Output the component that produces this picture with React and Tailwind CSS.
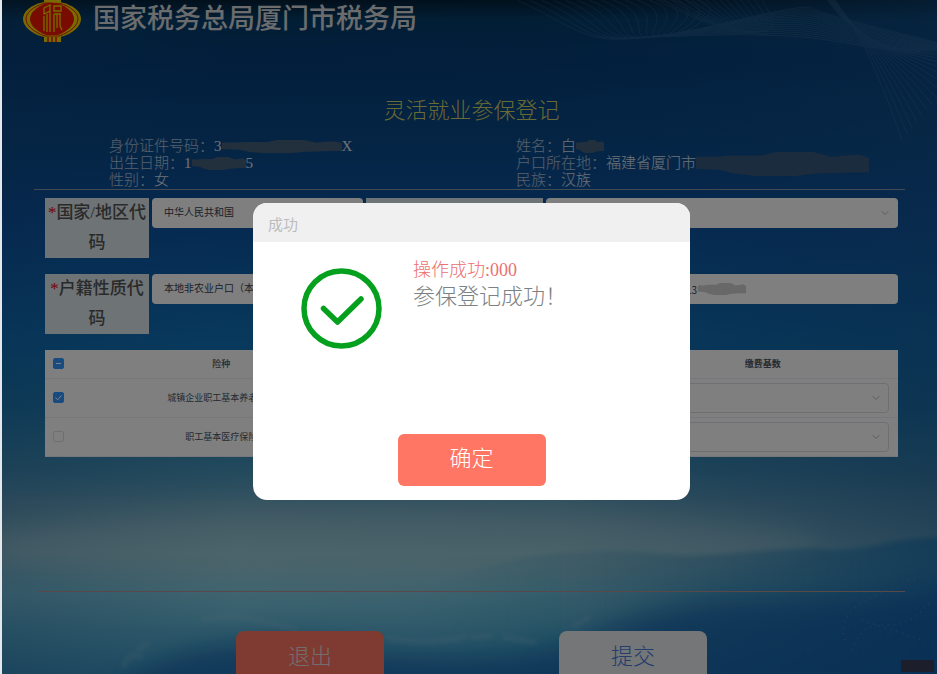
import { FiChevronDown } from "react-icons/fi";

const SERIF = "font-['Liberation_Serif','Noto_Sans_CJK_SC',serif]";
const SANS = "font-['Noto_Sans_CJK_SC',sans-serif]";

const insuranceRows = [
  { name: '城镇企业职工基本养老保险', checked: true },
  { name: '职工基本医疗保险', checked: false },
];

// Thin wave lines in the top right corner
const waves = Array.from({ length: 16 }, (_, i) => i);

const Background = () => (
  <svg className="absolute inset-0 w-full h-full" viewBox="0 0 935 674" preserveAspectRatio="none" fill="none" aria-hidden="true">
    <defs>
      <linearGradient id="sky" x1="0" y1="0" x2="0" y2="1">
        <stop offset="0" stopColor="#041c30" />
        <stop offset="0.03" stopColor="#043c68" />
        <stop offset="0.09" stopColor="#043c78" />
        <stop offset="0.2" stopColor="#0a4886" />
        <stop offset="0.33" stopColor="#0c54a4" />
        <stop offset="0.5" stopColor="#1074bc" />
        <stop offset="0.6" stopColor="#2080b8" />
        <stop offset="0.7" stopColor="#4a98bc" />
        <stop offset="0.75" stopColor="#70acc4" />
        <stop offset="0.82" stopColor="#94ccd8" />
        <stop offset="0.88" stopColor="#84d0e4" />
        <stop offset="0.94" stopColor="#60b8d8" />
        <stop offset="1" stopColor="#44a0cc" />
      </linearGradient>
      <linearGradient id="shade" x1="0" y1="0" x2="1" y2="0">
        <stop offset="0" stopColor="#104a88" stopOpacity="0.25" />
        <stop offset="0.25" stopColor="#0c4c90" stopOpacity="0.05" />
        <stop offset="0.6" stopColor="#0c4c90" stopOpacity="0.1" />
        <stop offset="1" stopColor="#145490" stopOpacity="0.5" />
      </linearGradient>
      <linearGradient id="hill" x1="0" y1="0" x2="1" y2="0">
        <stop offset="0" stopColor="#2484a8" stopOpacity="0" />
        <stop offset="0.5" stopColor="#1878ac" stopOpacity="0.3" />
        <stop offset="1" stopColor="#0c6cb0" stopOpacity="0.65" />
      </linearGradient>
      <filter id="soft" x="-20%" y="-50%" width="140%" height="200%">
        <feGaussianBlur stdDeviation="12" />
      </filter>
      <filter id="haze" x="-20%" y="-50%" width="140%" height="200%">
        <feGaussianBlur stdDeviation="2" />
      </filter>
    </defs>
    <rect width="935" height="674" fill="url(#sky)" />
    <rect width="935" height="674" fill="url(#shade)" />
    <ellipse cx="400" cy="545" rx="420" ry="38" fill="#b0ccd4" opacity="0.3" filter="url(#soft)" />
    <path d="M420 590 C520 545 610 548 680 556 C740 555 790 545 830 550 C880 550 890 535 960 538 V690 H420Z" fill="url(#hill)" filter="url(#haze)" />
    <path d="M100 700 C160 650 220 640 290 640 C380 655 430 660 500 655 C590 650 610 612 720 600 C820 600 870 595 960 585 V700Z" fill="#0a58a8" opacity="0.6" filter="url(#soft)" />
    <path d="M121 668 C125 655 135 652 140 658 M135 650 L146 643 M200 619 C240 614 260 620 296 630 M384 637 C410 643 440 643 465 636 M468 638 L490 636 M500 637 L535 643 M570 627 L588 617" stroke="#b0d8e8" strokeWidth="5" opacity="0.2" filter="url(#haze)" />
    <path d="M843 640 C835 610 860 600 900 585 M850 650 C870 600 890 650 930 600 M860 620 L920 640 M900 582 L920 577" stroke="#a0c8e8" strokeWidth="2" strokeDasharray="1 5" opacity="0.2" />
    <g stroke="#8cb4dc" opacity="0.15">
      {waves.map((i) => (
        <path key={i} d={`M${515 + i * 12} 0 C${560 + i * 12} ${20 - i / 2} ${580 + i * 5} 42 ${622 + i * 4} ${39 - i / 3} S${760 + i * 3} ${32 - i * 2} 810 ${38 - i * 2} S${870 + i * 3} ${52 - i} 935 ${50 - i / 2}`} />
      ))}
      {waves.map((i) => (
        <path key={i} d={`M${655 + i * 7} 0 C${690 + i * 6} ${18 + i} ${730 + i * 3} 36 ${770 - i * 4} ${34 - i / 3}`} />
      ))}
      {waves.map((i) => (
        <path key={i} d={`M${833 - i / 2} 0 C${850 + i} ${25 + i * 2} ${865 + i * 3} ${40 + i} ${900 + i * 5} ${140 - i * 6}`} />
      ))}
    </g>
  </svg>
);

const Emblem = () => (
  <svg className="w-[60px] h-[42px] shrink-0" viewBox="0 4 60 42" fill="none" aria-hidden="true">
    <path d="M22 0 H39 V9 H22Z M22 36 H39 V46 H22Z" fill="#f4d400" />
    <path d="M26 36 V46 M30 36 V46 M34 36 V46" stroke="#e02000" strokeWidth="1.5" />
    <path d="M22 6 C8 9 1 16 1 23 C1 30 9 38 22 41 H38 C51 38 59 30 59 23 C59 16 52 9 38 6Z" fill="#f4d400" />
    <path d="M23 7 C10 11 4 17 4 23 C4 29 11 36 23 40 H37 C49 36 56 29 56 23 C56 17 50 11 37 7Z" stroke="#e02000" strokeWidth="1" />
    <path d="M25 7 C14 11 8 17 8 23 C8 29 14 35 24 39 H36 C46 35 52 29 52 23 C52 17 46 11 35 7Z" fill="#f01800" />
    <path d="M22 5 L28 3 M22 12 L28 9 V15 L22 18 Z M31 6 H39 M32 10 H39 V15 H32Z M22 20 V35 M25 18 V36 M28 16 V36 M32 18 V36 M35 18 V32 M38 18 V30 L40 34 M32 18 H39" stroke="#f4d400" strokeWidth="1.3" />
  </svg>
);

const Smudge = ({ className }) => (
  <svg className={className} viewBox="0 0 100 20" preserveAspectRatio="none" aria-hidden="true">
    <path d="M0 4 L12 4 L20 3 L38 3 L46 0 L68 0 L78 4 L94 2 L100 5 V17 H88 L70 18 L58 20 H34 L22 18 L14 15 L0 14Z" fill="currentColor" />
  </svg>
);

const InfoLine = ({ label, children }) => (
  <div className="flex items-center h-[17px] whitespace-nowrap font-light">
    <dt className="text-white/65">{label}：</dt>
    <dd className="flex items-center text-white/85">{children}</dd>
  </div>
);

const FieldLabel = ({ htmlFor, children }) => (
  <label htmlFor={htmlFor} className={`${SERIF} h-[60px] bg-[#dce6ea] text-center text-[17px] leading-[30px] text-[#555] font-medium`}>
    <span className="text-red-600">*</span>{children}
  </label>
);

const SelectBox = ({ id, label, value, bordered }) => (
  <div className="relative">
    <select
      id={id}
      aria-label={label}
      className={`${SANS} block w-full h-[30px] appearance-none rounded-sm bg-white pl-3 pr-6 pb-1 text-[10px] text-gray-700 ${bordered ? 'border border-[#dcdfe6]' : ''}`}
    >
      <option>{value}</option>
    </select>
    <FiChevronDown className="absolute right-[7px] top-[9px] text-xs text-[#b4b8c0] pointer-events-none" />
  </div>
);

const Tick = ({ label, checked, partial }) => (
  <span className="relative block w-[11px] h-[11px]">
    <input
      type="checkbox"
      aria-label={label}
      defaultChecked={checked}
      className="block w-[11px] h-[11px] appearance-none rounded-xs border border-[#dcdfe6] checked:border-[#3096ff] checked:bg-[#3096ff]"
    />
    {checked && (
      <svg className="absolute inset-0 pointer-events-none" viewBox="0 0 11 11" fill="none" stroke="#fff" aria-hidden="true">
        <path d={partial ? "M3 5.5 H8" : "M2.5 5.5 L4.7 7.8 L8.5 3.5"} />
      </svg>
    )}
  </span>
);

const SuccessDialog = () => (
  <div className="absolute inset-0 z-10 flex items-start justify-center bg-black/50 pt-[203px] pl-1">
    <div role="dialog" aria-labelledby="dialog-title" className="w-[437px] rounded-[14px] overflow-hidden bg-white">
      <h2 id="dialog-title" className="h-[39px] bg-[#f0f0f1] pl-[15px] pt-1 text-[15px] leading-9 text-[#bcbcbc]">成功</h2>
      <div className="flex h-48 pl-12 gap-[31px]">
        <svg className="w-[81px] h-[81px] mt-[26px]" viewBox="0 0 81 81" fill="none" stroke="#04a01e" strokeLinecap="round" strokeLinejoin="round" aria-hidden="true">
          <circle cx="40.5" cy="40.5" r="37.5" strokeWidth="5.5" />
          <path d="M22.5 40.5 L36.5 54 L60 31" strokeWidth="5.5" />
        </svg>
        <div className="pt-4 font-light">
          <p className="text-lg leading-6 text-[#ec7070]">操作成功:000</p>
          <p className="text-[22px] leading-[30px] text-[#7c8284]">参保登记成功！</p>
        </div>
      </div>
      <div className="flex justify-center pb-[14px]">
        <button type="button" className="w-[148px] h-[52px] rounded-md bg-[#ff7664] pb-1 text-[22px] font-light text-white">确定</button>
      </div>
    </div>
  </div>
);

const App = () => {
  return (
    <div className={`${SERIF} relative h-screen overflow-hidden border-l-2 border-[#e4e8ec] bg-[#08407e]`}>
      <Background />

      <div className="relative">
        <header className="flex items-start h-9 pl-5 gap-[11px]">
          <Emblem />
          <h1 className="font-['Liberation_Sans','Noto_Sans_CJK_SC',sans-serif] text-[27px] leading-[38px] font-medium text-[#d4d8dc] whitespace-nowrap">国家税务总局厦门市税务局</h1>
        </header>

        <main className="px-8">
          <h2 className="pt-[59px] pl-1 text-center text-[22px] leading-8 font-light text-[#d4d468]">灵活就业参保登记</h2>

          {/* Personal details, partly masked */}
          <dl className="grid grid-cols-[407px_1fr] mt-[11px] pl-[75px] text-[15px] border-b border-[#8494a8]">
            <InfoLine label="身份证件号码">
              3<Smudge className="w-[120px] h-[13px] text-[#44607c]" />X
            </InfoLine>
            <InfoLine label="姓名">
              白<Smudge className="w-7 h-[13px] text-[#44607c]" />
            </InfoLine>
            <InfoLine label="出生日期">
              1<Smudge className="w-[54px] h-[13px] text-[#44607c]" />5
            </InfoLine>
            <InfoLine label="户口所在地">
              福建省厦门市<Smudge className="w-[173px] h-6 text-[#34587c]" />
            </InfoLine>
            <InfoLine label="性别">女</InfoLine>
            <InfoLine label="民族">汉族</InfoLine>
          </dl>

          <form className="pl-[11px] pr-[7px] pt-2">
            <div className="grid grid-cols-[104px_211px_177px_1fr] items-start gap-x-[3px] gap-y-4">
              <FieldLabel htmlFor="country">国家/地区代码</FieldLabel>
              <SelectBox id="country" value="中华人民共和国" />
              <div className="h-[60px] bg-[#dce6ea]" />
              <SelectBox label="证件" value="" />

              <FieldLabel htmlFor="household">户籍性质代码</FieldLabel>
              <SelectBox id="household" value="本地非农业户口（本市）" />
              <div className="h-[60px] bg-[#dce6ea]" />
              <div className="flex items-center h-[30px] rounded-sm bg-white pl-[140px]">
                <input type="text" aria-label="电话" defaultValue="13" className={`${SANS} w-3 text-[10px] text-gray-700`} />
                <Smudge className="w-12 h-3 text-[#d0d0d0]" />
              </div>
            </div>

            <table className={`${SANS} mt-4 w-full table-fixed bg-white text-[9px] leading-3 text-gray-600 text-center`}>
              <thead>
                <tr className="h-7 border-b border-[#ebeef5]">
                  <th className="w-[41px] pl-2"><Tick label="全选" checked partial /></th>
                  <th className="font-medium">险种</th>
                  <th></th>
                  <th className="font-bold">缴费基数</th>
                </tr>
              </thead>
              <tbody>
                {insuranceRows.map((row) => (
                  <tr key={row.name} className="h-[39px] border-b border-[#ebeef5]">
                    <td className="pl-2"><Tick label={row.name} checked={row.checked} /></td>
                    <td>{row.name}</td>
                    <td></td>
                    <td className="px-[9px]"><SelectBox label="缴费基数" value="" bordered /></td>
                  </tr>
                ))}
              </tbody>
            </table>
          </form>

          <div className="mt-[134px] ml-[3px] border-t border-[#b09090]" />

          <div className="flex justify-center gap-[175px] mt-[39px] pl-1">
            <button type="button" className="w-[148px] h-[52px] rounded-lg bg-[#ff7664] text-[22px] font-light text-[#e4dcdc]">退出</button>
            <button type="button" className="w-[148px] h-[52px] rounded-lg bg-[#e8ecf0] text-[22px] font-light text-[#4478d8]">提交</button>
          </div>
        </main>
      </div>

      <SuccessDialog />
      <div className="absolute right-[3px] bottom-[2px] z-20 w-[33px] h-3 bg-[#1c1f2b]" />
    </div>
  );
};

export default App;
